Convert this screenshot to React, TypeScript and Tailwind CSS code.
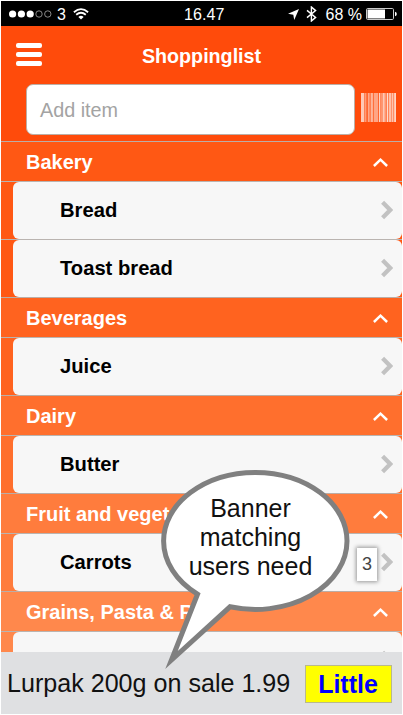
import React from 'react';
import { clsx } from 'clsx';

interface Item {
  name: string;
  count?: number;
}

interface Group {
  title: string;
  color: string;
  items: Item[];
}

const groups: Group[] = [
  { title: 'Bakery', color: 'bg-[#ff5814]', items: [{ name: 'Bread' }, { name: 'Toast bread' }] },
  { title: 'Beverages', color: 'bg-[#ff631f]', items: [{ name: 'Juice' }] },
  { title: 'Dairy', color: 'bg-[#ff6f2d]', items: [{ name: 'Butter' }] },
  { title: 'Fruit and veget', color: 'bg-[#ff7c3d]', items: [{ name: 'Carrots', count: 3 }] },
  { title: 'Grains, Pasta & R', color: 'bg-[#ff884c]', items: [{ name: '' }] },
];

// [x, width, opacity]
const bars: [number, number, number][] = [
  [0, 3, 0.7],
  [3.6, 1, 0.75],
  [5.4, 1, 0.4],
  [7.3, 1.2, 0.75],
  [9.4, 0.8, 0.5],
  [10.4, 1.2, 0.9],
  [12.6, 4.4, 0.5],
  [17.8, 1.5, 0.75],
  [19.7, 1.1, 0.5],
  [21.4, 2.4, 0.7],
  [24.3, 1.2, 0.6],
  [26, 1.1, 0.8],
  [27.6, 3, 0.65],
  [31.3, 1.1, 0.95],
  [33.3, 1.5, 0.95],
];

function StatusBar() {
  return (
    <div className="relative flex h-[25px] shrink-0 items-center justify-between bg-black pl-2 pr-[5px] text-base text-white">
      <div className="flex items-center">
        <svg width="43" height="8" viewBox="0 0 43 8">
          <circle cx="3.6" cy="4" r="3.6" fill="#fff" />
          <circle cx="12.4" cy="4" r="3.6" fill="#fff" />
          <circle cx="21.2" cy="4" r="3.6" fill="#fff" />
          <circle cx="30" cy="4" r="3.2" fill="none" stroke="#aaa" strokeWidth="0.8" />
          <circle cx="38.8" cy="4" r="3.2" fill="none" stroke="#aaa" strokeWidth="0.8" />
        </svg>
        <span className="ml-[5px] mt-0.5 leading-none">3</span>
        <svg className="ml-[7px]" width="16" height="12" viewBox="0 0 16 12" fill="none" stroke="#fff" strokeWidth="1.8">
          <path d="M0.9 4.2Q8 -2 15.1 4.2" />
          <path d="M3.2 6.8Q8 2.8 12.8 6.8" />
          <path d="M5.4 8.9Q8 6.5 10.6 8.9L8 11.6Z" fill="#fff" stroke="none" />
        </svg>
      </div>
      <span className="absolute left-[183px] top-[6px] leading-none tracking-[0.1px]">16.47</span>
      <div className="flex items-center">
        <svg className="mt-px" width="11" height="11" viewBox="0 0 11 11">
          <path d="M11 0L6.2 11L5.3 5.7L0 4.8Z" fill="#fff" />
        </svg>
        <svg className="ml-[7px]" width="11" height="16" viewBox="0 0 11 16" fill="none" stroke="#fff" strokeWidth="1.4">
          <path d="M1 4.4L9.6 11.4L5.4 15V1L9.6 4.6L1 11.6" />
        </svg>
        <span className="ml-[9px] mt-0.5 leading-none">68 %</span>
        <svg className="ml-1" width="31" height="12" viewBox="0 0 31 12">
          <rect x="0.5" y="0.5" width="27" height="11" rx="1.2" fill="none" stroke="#ccc" />
          <rect x="1.5" y="1.5" width="17.5" height="9" fill="#fff" />
          <path d="M29 3.8Q30.8 4.2 30.8 6T29 8.2Z" fill="#fff" />
        </svg>
      </div>
    </div>
  );
}

function Header() {
  return (
    <div className="flex h-[115px] shrink-0 flex-col bg-[#ff4b0b]">
      <div className="flex h-[58px] items-center">
        <div className="ml-[15px] flex w-[26px] flex-col gap-1 pb-px">
          <span className="h-[5px] rounded-[2px] bg-white" />
          <span className="h-[5px] rounded-[2px] bg-white" />
          <span className="h-[5px] rounded-[2px] bg-white" />
        </div>
        <h1 className="mr-[41px] flex-1 pt-1 text-center text-[19.7px] font-bold leading-none text-white">Shoppinglist</h1>
      </div>
      <div className="flex items-start pl-[25px]">
        <div className="flex h-[51px] w-[329px] items-center rounded-[7px] border border-[#bcaea6] bg-white pl-[13px] pt-0.5 text-[19.8px] text-[#a3a3a3]">
          Add item
        </div>
        <svg className="ml-[6px] mt-[9px]" width="36" height="29" viewBox="0 0 36 29" fill="#fff">
          {bars.map(([x, width, opacity]) => (
            <rect key={x} x={x} y="0" width={width} height="29" opacity={opacity} />
          ))}
        </svg>
      </div>
    </div>
  );
}

function ItemRow({ item }: { item: Item }) {
  return (
    <div className="h-[58px] shrink-0 border-t border-[#bab4b0] pl-3">
      <div className="flex h-[57px] items-center rounded-[6px] bg-[#f7f7f7] pb-0.5 pl-[47px] pr-[9px]">
        <span className="flex-1 pt-0.5 text-[20.2px] font-bold leading-none text-black">{item.name}</span>
        {item.count && (
          <span className="mr-1 mt-[5px] flex h-[33px] w-5 items-center justify-center bg-white text-[18px] text-[#444] shadow-[0_0_4px_1px_rgba(0,0,0,0.4)]">
            {item.count}
          </span>
        )}
        <svg width="12" height="20" viewBox="0 0 12 20" fill="none" stroke="#c2c2c2" strokeWidth="4.2">
          <path d="M1.6 2.2L9.2 10L1.6 17.8" />
        </svg>
      </div>
    </div>
  );
}

function GroupSection({ group }: { group: Group }) {
  return (
    <section className={clsx('shrink-0', group.color)}>
      <div className="flex h-10 items-center justify-between border-t border-[#bbada6] pl-[25px] pr-[14px]">
        <h2 className="text-[20px] font-bold leading-none text-white">{group.title}</h2>
        <svg className="mt-[2px]" width="15" height="9" viewBox="0 0 15 9" fill="none" stroke="#fff" strokeWidth="2.5">
          <path d="M0.9 8L7.5 1.7L14.1 8" />
        </svg>
      </div>
      {group.items.map((item) => (
        <ItemRow key={item.name} item={item} />
      ))}
    </section>
  );
}

function Banner() {
  return (
    <div className="flex h-[62px] shrink-0 items-center bg-[#dfe0e2] pl-[6px]">
      <span className="w-[298px] whitespace-nowrap pt-0.5 text-[25.1px] leading-none text-[#111]">Lurpak 200g on sale 1.99</span>
      <span className="mt-0.5 flex h-[38px] w-[87px] items-center justify-center border border-[#b9b98c] bg-[#ffff00] pr-px text-[25px] font-bold leading-none text-[#0000ff]">
        Little
      </span>
    </div>
  );
}

function SpeechBubble() {
  return (
    <div className="absolute left-[155px] top-[465px] h-[210px] w-[200px]">
      <svg className="absolute inset-0" width="200" height="210" viewBox="155 465 200 210">
        <path
          d="M230 606.8A91.7 68.5 0 0 0 347 541A91.7 68.5 0 0 0 163.6 541A91.7 68.5 0 0 0 197.5 594.2L171.5 660Z"
          fill="#fff"
          stroke="#808080"
          strokeWidth="5"
          strokeMiterlimit="10"
        />
      </svg>
      <p className="relative pr-[9px] pt-[29px] text-center text-[25px] leading-[29px] text-[#111]">
        Banner
        <br />
        matching
        <br />
        users need
      </p>
    </div>
  );
}

export default function App() {
  return (
    <div className="relative h-[715px] w-[403px] overflow-hidden bg-white p-px font-['Liberation_Sans',Arial,sans-serif]">
      <div className="flex h-[713px] flex-col">
        <StatusBar />
        <Header />
        <main className="min-h-0 flex-1 overflow-hidden">
          {groups.map((group) => (
            <GroupSection key={group.title} group={group} />
          ))}
        </main>
        <Banner />
      </div>
      <SpeechBubble />
    </div>
  );
}
